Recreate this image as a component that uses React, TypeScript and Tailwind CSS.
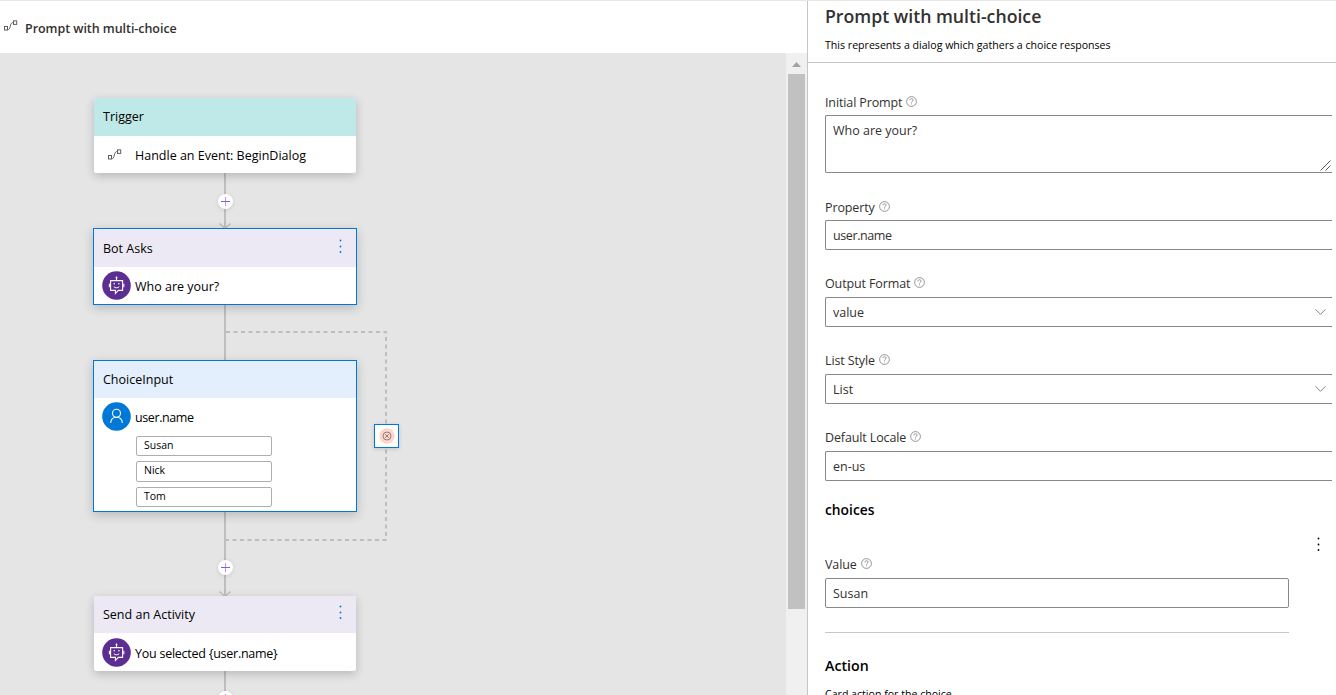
import React from 'react';

function FlowIcon({ className = '' }: { className?: string }) {
  return (
    <svg width="14" height="12" viewBox="0 0 14 12" fill="none" stroke="#605e5c" strokeWidth="1" className={className}>
      <rect x="0.5" y="6.5" width="3" height="3.5" />
      <rect x="9.5" y="0.9" width="3.2" height="3.5" />
      <path d="M3.5 9.6c1.6.2 2.2-.9 2.8-3.4C6.9 3.7 7.5 2.5 9.5 2.5" />
    </svg>
  );
}

function HelpIcon() {
  return (
    <svg width="11" height="11" viewBox="0 0 11 11" fill="none" stroke="#7d7b79" strokeWidth="0.8" className="shrink-0">
      <circle cx="5.5" cy="5.5" r="4.9" />
      <path d="M3.9 4.3c0-2.1 3.2-2.1 3.2-.2 0 1.2-1.6 1.2-1.6 2.5" />
      <path d="M5.5 7.5v.9" />
    </svg>
  );
}

function BotIcon() {
  return (
    <svg width="29" height="29" viewBox="0 0 29 29" fill="none" className="shrink-0">
      <circle cx="14.5" cy="14.5" r="14.3" fill="#5c2e91" />
      <g stroke="#fff" strokeWidth="1.1">
        <path d="M8.6 9.6h12v9.8h-4.2l-3 3v-3H8.6z" />
        <path d="M14.5 9.5V7M7.4 12.8v3.4M21.8 12.8v3.4" />
        <path d="M11.8 15.7c1.4 1.5 4 1.5 5.4 0" strokeWidth="1" />
      </g>
      <circle cx="14.5" cy="6.5" r="1" fill="#fff" />
      <circle cx="12.2" cy="12.8" r="0.8" fill="#fff" />
      <circle cx="16.9" cy="12.8" r="0.8" fill="#fff" />
    </svg>
  );
}

function UserIcon() {
  return (
    <svg width="29" height="29" viewBox="0 0 29 29" fill="none" className="shrink-0">
      <circle cx="14.5" cy="14.5" r="14.3" fill="#0078d7" />
      <g stroke="#fff" strokeWidth="1.1">
        <circle cx="14.5" cy="11.3" r="4" />
        <path d="M8.6 21c.3-3.5 2.7-5.7 5.9-5.7s5.6 2.2 5.9 5.7" />
      </g>
    </svg>
  );
}

function Dots({ className }: { className: string }) {
  return (
    <svg width="4" height="14" viewBox="0 0 4 14" fill="currentColor" className={className}>
      <circle cx="2.5" cy="1.5" r="0.9" />
      <circle cx="2.5" cy="7.5" r="0.9" />
      <circle cx="2.5" cy="13" r="0.9" />
    </svg>
  );
}

function AddButton({ className }: { className: string }) {
  return (
    <button className={`absolute left-[218px] flex size-[15px] items-center justify-center rounded-full bg-white shadow-[0_1px_4px_rgba(0,0,0,0.12)] ${className}`}>
      <svg width="9" height="9" viewBox="0 0 9 9" shapeRendering="crispEdges">
        <path d="M4 0h1v9h-1z" fill="#d98be8" />
        <path d="M0 4h9v1h-9z" fill="#5b74d8" />
      </svg>
    </button>
  );
}

type NodeProps = {
  title: string;
  headClass: string;
  boxClass: string;
  menu?: boolean;
  children: React.ReactNode;
};

function FlowNode({ title, headClass, boxClass, menu, children }: NodeProps) {
  return (
    <section className={`absolute flex flex-col bg-white text-[12.5px] text-black shadow-[0_3px_10px_rgba(0,0,0,0.2)] ${boxClass}`}>
      <header className={`flex shrink-0 items-center justify-between ${headClass}`}>
        <span>{title}</span>
        {menu && <Dots className="mb-[5px] text-[#0078d4]" />}
      </header>
      {children}
    </section>
  );
}

function Label({ text, className = '' }: { text: string; className?: string }) {
  return (
    <div className={`flex h-4 shrink-0 items-center gap-1 text-[12.5px] tracking-[-0.12px] text-[#323130] ${className}`}>
      <span className="pt-[2px]">{text}</span>
      <span className="pb-[2px]"><HelpIcon /></span>
    </div>
  );
}

function Field({ value, select, className = '' }: { value: string; select?: boolean; className?: string }) {
  return (
    <div className={`flex h-[30px] shrink-0 items-center justify-between rounded-l-[2px] border border-r-0 border-[#8a8886] pr-[6px] pl-[7px] text-[12.5px] text-[#323130] ${className}`}>
      <span className="pt-px">{value}</span>
      {select && (
        <svg width="11" height="6" viewBox="0 0 11 6" fill="none" stroke="#868482" strokeWidth="1" className="mb-px">
          <path d="M.5.3l5 5 5-5" />
        </svg>
      )}
    </div>
  );
}

export default function App() {
  return (
    <div className="flex h-[695px] w-[1336px] overflow-hidden border-t border-[#e6e6e6] bg-white font-['Open_Sans','Noto_Sans',sans-serif] leading-4">
      <main className="flex w-[807px] flex-col">
        <div className="flex h-[52px] shrink-0 items-center pt-[2px] pl-1 text-[12.5px] font-semibold text-[#323130]">
          <FlowIcon className="mr-[7px] mb-[5px]" />
          <span className="pt-px tracking-[-0.05px]">Prompt with multi-choice</span>
        </div>
        <div className="flex min-h-0 flex-1">
          <div className="relative w-[786px] overflow-hidden bg-[#e5e5e5]">
            <svg className="absolute top-0 left-0" width="786" height="642" viewBox="0 53 786 642" fill="none" stroke="#bebebe" strokeWidth="2">
              <path d="M225 173v55M225 305v55M225 512v84M225 671v24" />
              <path d="M219.5 223.5l5.5 5 5.5-5M219.5 591.5l5.5 5 5.5-5" strokeWidth="1.5" />
              <path d="M226 332h160v208H226" strokeDasharray="4 3.5" />
            </svg>

            <FlowNode title="Trigger" boxClass="left-[94px] top-[45px] h-[75px] w-[262px] rounded-[2px]" headClass="h-[38px] rounded-t-[2px] bg-[#bfe9e8] px-[9px]">
              <div className="flex flex-1 items-center pl-[14px]">
                <FlowIcon className="mr-[13px]" />
                <span className="pt-[3px]">Handle an Event: BeginDialog</span>
              </div>
            </FlowNode>
            <AddButton className="top-[141px]" />

            <FlowNode title="Bot Asks" menu boxClass="left-[93px] top-[175px] h-[77px] w-[264px] border border-[#0078d4]" headClass="h-[38px] bg-[#ece9f4] pt-px pl-[9px] pr-[14px]">
              <div className="flex flex-1 items-center gap-1 pl-2">
                <BotIcon />
                <span className="pt-[3px]">Who are your?</span>
              </div>
            </FlowNode>

            <FlowNode title="ChoiceInput" boxClass="left-[93px] top-[307px] h-[152px] w-[264px] border border-[#0078d4]" headClass="h-[37px] bg-[#e3effd] px-[9px]">
              <div className="flex h-[38px] items-center gap-1 pb-px pl-2">
                <UserIcon />
                <span className="pt-[3px] tracking-[-0.4px]">user.name</span>
              </div>
              <ul className="ml-[42px] flex w-[136px] flex-col gap-[5px] text-[10.5px] leading-[17px]">
                {['Susan', 'Nick', 'Tom'].map((name) => (
                  <li key={name} className="h-[20.3px] rounded-[2px] border border-[#b0aeac] pl-[7px]">{name}</li>
                ))}
              </ul>
            </FlowNode>

            <div className="absolute top-[371px] left-[374px] flex h-6 w-[25px] items-center justify-center border border-[#0078d4] bg-white shadow-[0_1px_4px_rgba(0,0,0,0.15)]">
              <svg width="16" height="16" viewBox="0 0 16 16" fill="none">
                <circle cx="8" cy="8" r="7.7" fill="#fdd5cb" />
                <g stroke="#7b6a68" strokeWidth="0.8">
                  <circle cx="8" cy="8" r="4" />
                  <path d="M6.3 6.3l3.4 3.4M9.7 6.3l-3.4 3.4" />
                </g>
              </svg>
            </div>

            <AddButton className="top-[507px]" />
            <FlowNode title="Send an Activity" menu boxClass="left-[94px] top-[543px] h-[75px] w-[262px] rounded-[2px]" headClass="h-[37px] bg-[#ece9f4] pl-[9px] pr-[14px]">
              <div className="flex flex-1 items-center gap-1 pl-2">
                <BotIcon />
                <span className="pt-[3px] tracking-[-0.25px]">You selected {'{user.name}'}</span>
              </div>
            </FlowNode>
            <AddButton className="top-[638px]" />
          </div>
          <div className="flex w-[21px] flex-col items-center bg-[#f0f0f0]">
            <div className="flex h-[21px] items-center pt-[2px]">
              <svg width="9" height="5" viewBox="0 0 9 5"><path d="M0 5l4.5-5L9 5z" fill="#a3a3a3" /></svg>
            </div>
            <div className="h-[535px] w-[17px] bg-[#c1c1c1]" />
          </div>
        </div>
      </main>

      <aside className="flex flex-1 flex-col border-l border-[#c8c6c4]">
        <header className="h-[62px] shrink-0 border-b border-[#c8c6c4] pl-[17px]">
          <h1 className="pt-[4px] text-[17.7px] leading-[23px] font-semibold text-[#323130]">Prompt with multi-choice</h1>
          <p className="pt-[9px] text-[10.6px] text-black">This represents a dialog which gathers a choice responses</p>
        </header>
        <div className="flex min-h-0 flex-1 flex-col overflow-hidden pr-1 pl-[17px]">
          <Label text="Initial Prompt" className="mt-[31px] mb-[5px]" />
          <div className="flex h-[58px] shrink-0 justify-between rounded-l-[2px] border border-r-0 border-[#8a8886] pt-[7px] pl-[7px] text-[12.5px] text-[#323130]">
            <span>Who are your?</span>
            <svg width="11" height="11" viewBox="0 0 11 11" className="mr-px mb-px self-end" stroke="#555" fill="none"><path d="M.5 10.5l10-10M5.5 10.5l5-5" /></svg>
          </div>
          <Label text="Property" className="mt-[26px] mb-[5px]" />
          <Field value="user.name" className="pt-px tracking-[-0.4px]" />
          <Label text="Output Format" className="mt-[25px] mb-[6px]" />
          <Field value="value" select />
          <Label text="List Style" className="mt-[25px] mb-[6px]" />
          <Field value="List" select />
          <Label text="Default Locale" className="mt-[25px] mb-[6px]" />
          <Field value="en-us" />
          <h2 className="mt-[21px] shrink-0 text-[13.8px] font-semibold text-black">choices</h2>
          <Dots className="mt-[19px] mr-3 shrink-0 self-end text-black" />
          <div className="mr-[43px] shrink-0">
            <Label text="Value" className="mt-[5px] mb-[6px]" />
            <div className="flex h-[30px] items-center rounded-[2px] border border-[#8a8886] pl-[7px] text-[12.5px] text-[#323130]">
              <span className="pt-[2px]">Susan</span>
            </div>
            <div className="mt-6 border-t border-[#c8c6c4]" />
          </div>
          <h2 className="mt-[25px] shrink-0 text-[14.2px] font-semibold text-black">Action</h2>
          <p className="mt-[12px] shrink-0 text-[10.6px] text-black">Card action for the choice.</p>
        </div>
      </aside>
    </div>
  );
}
